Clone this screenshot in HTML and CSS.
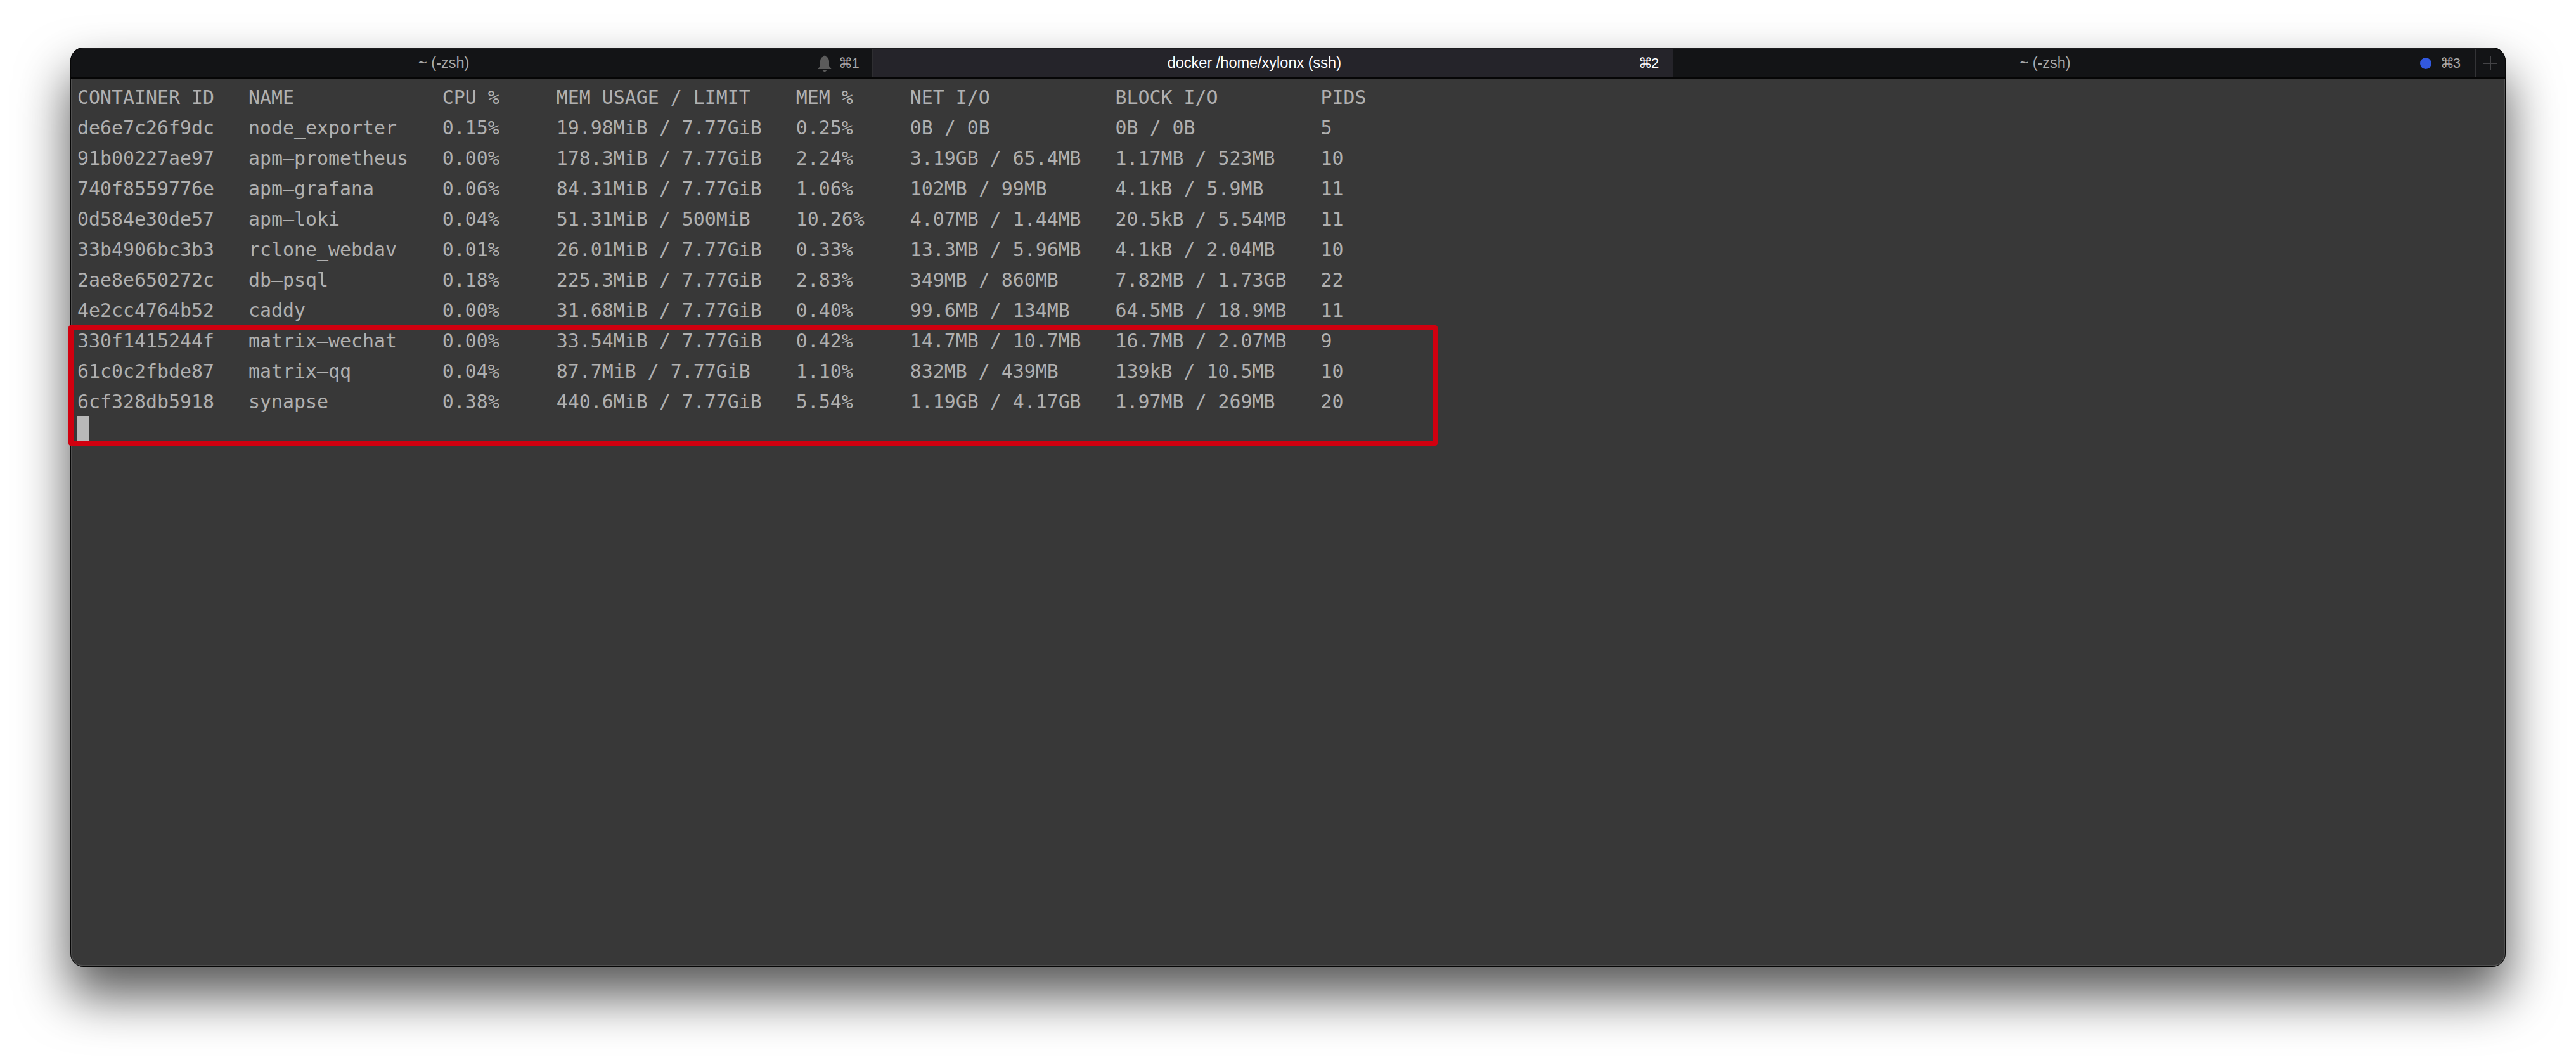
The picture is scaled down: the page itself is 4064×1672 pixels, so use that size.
FILE: index.html
```html
<!DOCTYPE html>
<html lang="en">
<head>
<meta charset="utf-8">
<title>docker /home/xylonx (ssh)</title>
<link rel="stylesheet" href="styles.css">
</head>
<body>
<main class="window">
  <header class="tabbar">
    <div class="tab tab-first">
      <span class="tab-title">~ (-zsh)</span>
      <svg class="bell" viewBox="0 0 24 28" aria-hidden="true"><path d="M12 1.5c-1.4 0-2.2.9-2.400 2C6.400 4.500 5 7.300 5 11v6.500c0 1.600-1.200 2.700-3.200 4v1.500h20.400v-1.500c-2-1.300-3.200-2.400-3.200-4V11c0-3.700-1.400-6.500-4.600-7.500-.2-1.100-1-2-2.400-2z"/><path d="M8 24.600h8l-4 3.400z"/></svg>
      <span class="shortcut">⌘1</span>
    </div>
    <div class="tab tab-active">
      <span class="tab-title">docker /home/xylonx (ssh)</span>
      <span class="shortcut">⌘2</span>
    </div>
    <div class="tab">
      <span class="tab-title">~ (-zsh)</span>
      <span class="dot"></span>
      <span class="shortcut">⌘3</span>
    </div>
    <div class="new-tab">
      <svg class="plus" viewBox="0 0 22 22" aria-hidden="true"><path d="M0 11h22M11 0v22"/></svg>
    </div>
  </header>
  <section class="terminal">
<pre class="output">CONTAINER ID   NAME             CPU %     MEM USAGE / LIMIT    MEM %     NET I/O           BLOCK I/O         PIDS
de6e7c26f9dc   node_exporter    0.15%     19.98MiB / 7.77GiB   0.25%     0B / 0B           0B / 0B           5
91b00227ae97   apm–prometheus   0.00%     178.3MiB / 7.77GiB   2.24%     3.19GB / 65.4MB   1.17MB / 523MB    10
740f8559776e   apm–grafana      0.06%     84.31MiB / 7.77GiB   1.06%     102MB / 99MB      4.1kB / 5.9MB     11
0d584e30de57   apm–loki         0.04%     51.31MiB / 500MiB    10.26%    4.07MB / 1.44MB   20.5kB / 5.54MB   11
33b4906bc3b3   rclone_webdav    0.01%     26.01MiB / 7.77GiB   0.33%     13.3MB / 5.96MB   4.1kB / 2.04MB    10
2ae8e650272c   db–psql          0.18%     225.3MiB / 7.77GiB   2.83%     349MB / 860MB     7.82MB / 1.73GB   22
4e2cc4764b52   caddy            0.00%     31.68MiB / 7.77GiB   0.40%     99.6MB / 134MB    64.5MB / 18.9MB   11
330f1415244f   matrix–wechat    0.00%     33.54MiB / 7.77GiB   0.42%     14.7MB / 10.7MB   16.7MB / 2.07MB   9
61c0c2fbde87   matrix–qq        0.04%     87.7MiB / 7.77GiB    1.10%     832MB / 439MB     139kB / 10.5MB    10
6cf328db5918   synapse          0.38%     440.6MiB / 7.77GiB   5.54%     1.19GB / 4.17GB   1.97MB / 269MB    20</pre>
    <div class="cursor"></div>
  </section>
</main>
<div class="highlight"></div>
</body>
</html>
```

FILE: styles.css
```css
html, body {
  margin: 0;
  height: 100%;
  background: #ffffff;
  overflow: hidden;
}

body {
  padding: 75px 111px 0;
  box-sizing: border-box;
}

.window {
  position: relative;
  width: 3842px;
  height: 1450px;
  display: flex;
  flex-direction: column;
  border-radius: 21px;
  overflow: hidden;
  background: #383838;
  box-shadow: 0 44px 80px 2px rgba(0, 0, 0, 0.65);
}

.window::after {
  content: "";
  position: absolute;
  inset: 0;
  border-radius: 21px;
  box-shadow: inset 0 0 0 1px #060606;
  pointer-events: none;
}

.tabbar {
  height: 45px;
  flex: none;
  display: grid;
  grid-template-columns: 1fr 1fr 1fr 48px;
  background: #131416;
  border-top: 2px solid #1c1c1e;
  border-bottom: 2px solid #060606;
  font-family: "Liberation Sans", Arial, sans-serif;
  font-size: 23.5px;
  color: #a9a9a9;
}

.tab {
  display: flex;
  align-items: center;
  padding: 0 25px 0 0;
  min-width: 0;
}

.tab-first {
  padding-right: 22px;
}

.tab-active {
  padding-left: 11px;
  background: #25242a;
  color: #ffffff;
  box-shadow: inset 1px 0 0 #2e2e31, inset -1px 0 0 #2e2e31;
}

.tab-title {
  flex: 1;
  text-align: center;
}

.shortcut {
  font-size: 22px;
  letter-spacing: -2px;
  margin-left: 14px;
}

.bell {
  width: 24px;
  height: 28px;
  margin-right: -4px;
  fill: #5b5b5b;
}

.dot {
  width: 18px;
  height: 18px;
  margin-left: 5px;
  border-radius: 50%;
  background: #3259e0;
}

.new-tab {
  display: flex;
  align-items: center;
  justify-content: center;
  box-shadow: inset 1px 0 0 #333336;
}

.plus {
  width: 22px;
  height: 22px;
  fill: none;
  stroke: #444447;
  stroke-width: 2;
}

.terminal {
  flex: 1;
  padding: 4px 11px;
  border-radius: 0 0 20px 20px;
  box-shadow: inset 3px 0 0 #505050, inset -3px 0 0 #505050, inset 0 -3px 0 #505050;
}

.output {
  margin: 0 0 -2px;
  padding-top: 2px;
  font-family: "DejaVu Sans Mono", monospace;
  font-size: 29.9px;
  line-height: 48px;
  color: #b0b0b0;
}

.cursor {
  width: 18px;
  height: 48px;
  background: #b9b9b9;
}

.highlight {
  position: absolute;
  left: 108px;
  top: 513px;
  width: 2160px;
  height: 190px;
  box-sizing: border-box;
  border: 8px solid #d0000f;
  border-radius: 4px;
}
```
